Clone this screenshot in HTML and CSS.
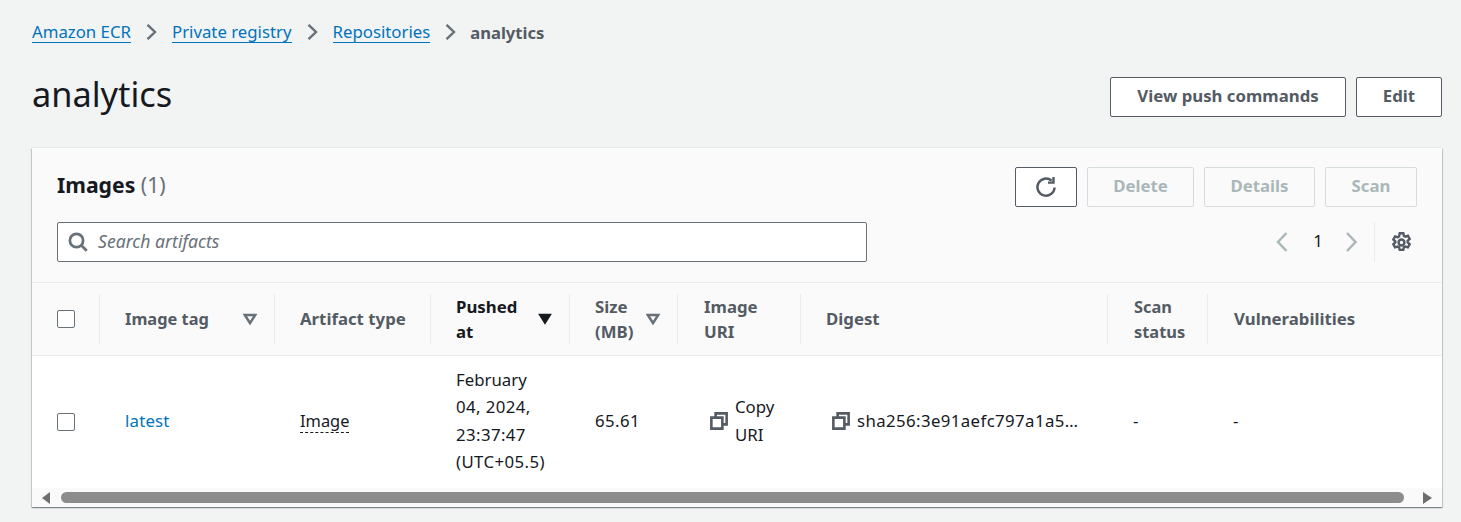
FILE: index.html
```html
<!DOCTYPE html>
<html lang="en">
<head>
<meta charset="utf-8">
<title>analytics</title>
<link rel="stylesheet" href="styles.css">
</head>
<body>
<nav class="crumbs">
  <a href="#">Amazon ECR</a>
  <svg class="sep" viewBox="0 0 16 16"><path d="M2.500 .8 10 8l-7.500 7.200"/></svg>
  <a href="#">Private registry</a>
  <svg class="sep" viewBox="0 0 16 16"><path d="M2.500 .8 10 8l-7.500 7.200"/></svg>
  <a href="#">Repositories</a>
  <svg class="sep" viewBox="0 0 16 16"><path d="M2.500 .8 10 8l-7.500 7.200"/></svg>
  <span class="here">analytics</span>
</nav>
<header class="page-head">
  <h1>analytics</h1>
  <div class="actions">
    <button class="btn btn-push">View push commands</button>
    <button class="btn btn-edit">Edit</button>
  </div>
</header>
<section class="card">
  <div class="card-head">
    <div class="title-row">
      <h2>Images <span class="count">(1)</span></h2>
      <div class="tools">
        <button class="btn btn-refresh" aria-label="Refresh">
          <svg class="ico" viewBox="0 0 20 20"><path d="M17.800 10.500a7.800 7.800 0 1 1-2.700-6.300"/><path d="M16.800 1v5h-5"/></svg>
        </button>
        <button class="btn off btn-delete">Delete</button>
        <button class="btn off btn-details">Details</button>
        <button class="btn off btn-scan">Scan</button>
      </div>
    </div>
    <div class="filter-row">
      <div class="search">
        <svg class="search-ico" viewBox="0 0 16 16"><circle cx="6.800" cy="6.800" r="5.300"/><path d="m10.800 10.800 4.200 4.200"/></svg>
        <span>Search artifacts</span>
      </div>
      <div class="pager">
        <svg class="pg" viewBox="0 0 20 20"><path d="M11.500 1 3 10l8.500 9"/></svg>
        <span class="page-num">1</span>
        <svg class="pg" viewBox="0 0 20 20"><path d="m3 1 8.500 9L3 19"/></svg>
        <span class="pref">
          <svg class="gear" viewBox="0 0 20 20"><circle cx="10" cy="10" r="2.800"/><path d="M8.300 1.200h3.400l.6 2.500 1.300.7 2.500-.8 1.700 3-1.900 1.700v1.600l1.900 1.700-1.700 3-2.500-.8-1.300.7-.6 2.500H8.300l-.6-2.500-1.300-.7-2.500.8-1.700-3 1.900-1.700V8.900L2.200 7.200l1.700-3 2.500.8 1.300-.7z"/></svg>
        </span>
      </div>
    </div>
  </div>
  <table class="grid">
    <colgroup>
      <col class="c1"><col class="c2"><col class="c3"><col class="c4"><col class="c5"><col class="c6"><col class="c7"><col class="c8"><col class="c9">
    </colgroup>
    <thead>
      <tr>
        <th class="sel"><span class="check"></span></th>
        <th><div class="th"><span class="tight">Image tag</span><svg class="sort" viewBox="0 0 12 10"><path d="M1.500 1.500h9L6 8.500z"/></svg></div></th>
        <th><div class="th"><span>Artifact type</span></div></th>
        <th class="active"><div class="th"><span>Pushed<br>at</span><svg class="sort on" viewBox="0 0 12 10"><path d="M1 1h10L6 9z"/></svg></div></th>
        <th><div class="th"><span>Size<br>(MB)</span><svg class="sort" viewBox="0 0 12 10"><path d="M1.500 1.500h9L6 8.500z"/></svg></div></th>
        <th class="nudge"><div class="th"><span>Image<br>URI</span></div></th>
        <th><div class="th"><span>Digest</span></div></th>
        <th class="nudge"><div class="th"><span class="tight">Scan<br>status</span></div></th>
        <th class="last nudge"><div class="th"><span>Vulnerabilities</span></div></th>
      </tr>
    </thead>
    <tbody>
      <tr>
        <td class="sel"><span class="check"></span></td>
        <td><a href="#" class="tag">latest</a></td>
        <td><span class="dotted">Image</span></td>
        <td>February<br><span class="num">04, 2024,</span><br><span class="num">23:37:47</span><br><span class="num">(UTC+05.5)</span></td>
        <td><span class="num">65.61</span></td>
        <td class="uri"><div class="copy"><svg class="copy-ico" viewBox="0 0 16 16"><path d="M1.200 5h9.800v9.800H1.200z"/><path d="M5 5V1.200h9.800V11H11"/></svg><span>Copy<br>URI</span></div></td>
        <td class="digest"><div class="copy"><svg class="copy-ico" viewBox="0 0 16 16"><path d="M1.200 5h9.800v9.800H1.200z"/><path d="M5 5V1.200h9.800V11H11"/></svg><span class="hash">sha256:3e91aefc797a1a5…</span></div></td>
        <td class="dash1">-</td>
        <td class="dash2">-</td>
      </tr>
    </tbody>
  </table>
  <div class="hscroll">
    <span class="arrow left"></span>
    <span class="thumb"></span>
    <span class="arrow right"></span>
  </div>
</section>
</body>
</html>
```
FILE: styles.css
```css
* { box-sizing: border-box; }
html, body { margin: 0; height: 522px; overflow: hidden; }
body {
  background: #f2f3f3;
  color: #16191f;
  font-family: "Noto Sans", "Open Sans", sans-serif;
  font-size: 16.800px;
  padding: 20px 19px 0 32px;
}
a { color: #0073bb; }
.crumbs { display: flex; align-items: center; height: 24px; }
.crumbs a { text-decoration: none; border-bottom: 1px solid #0073bb; line-height: 21px; }
.sep { width: 16px; height: 16px; margin: 0 11px 0 14px; fill: none; stroke: #687078; stroke-width: 2.400; }
.here { color: #545b64; font-weight: 700; font-size: 16.600px; margin-left: -1px; }
.page-head { display: flex; justify-content: space-between; align-items: center; height: 40px; margin-top: 33px; }
h1 { margin: -6px 0 0; font-size: 34.300px; font-weight: 400; line-height: 40px; }
.actions { display: flex; gap: 10px; }
.btn {
  display: flex; align-items: center; justify-content: center;
  height: 40px; padding: 0 0 4px; font: 700 16.800px "Noto Sans", sans-serif;
  color: #545b64; background: #fff;
  border: 1px solid #545b64; border-radius: 2px;
}
.btn-push { width: 236px; }
.btn-edit { width: 86px; }
.card {
  margin: 31px 0 0; height: 359px; background: #fff;
  box-shadow: 0 1px 1px 0 rgba(0, 28, 36, .3), 1px 1px 1px 0 rgba(0, 28, 36, .15), -1px 1px 1px 0 rgba(0, 28, 36, .15), 0 -1px 1px 0 rgba(0, 28, 36, .04);
}
.card-head { background: #fafafa; height: 135px; padding: 19px 25px 0 25px; border-bottom: 1px solid #eaeded; }
.title-row { display: flex; justify-content: space-between; align-items: center; height: 40px; }
h2 { margin: -5px 0 0; font-size: 21.200px; font-weight: 700; line-height: 36px; }
.count { color: #687078; font-weight: 400; }
.tools { display: flex; gap: 10px; }
.btn-refresh { width: 62px; background: #fff; padding: 0; }
.ico { width: 22px; height: 22px; fill: none; stroke: #545b64; stroke-width: 2.200; }
.off { color: #aab7b8; background: #fafafa; border-color: #d5dbdb; }
.btn-delete { width: 107px; }
.btn-details { width: 111px; }
.btn-scan { width: 92px; }
.filter-row { display: flex; justify-content: space-between; align-items: center; margin-top: 15px; height: 40px; }
.search {
  display: flex; align-items: center; gap: 10px; width: 810px; height: 40px; padding: 0 0 2px 10px;
  background: #fff; border: 1px solid #687078; border-radius: 2px;
  color: #687078; font-style: italic; font-size: 17.600px;
}
.search-ico { width: 20px; height: 20px; fill: none; stroke: #687078; stroke-width: 2.200; margin-top: 2px; }
.pager { display: flex; align-items: center; }
.pg { width: 20px; height: 20px; margin-left: -1px; fill: none; stroke: #aab7b8; stroke-width: 2.500; }
.page-num { width: 50px; padding-right: 4px; text-align: center; color: #16191f; margin-top: -4px; }
.pref { display: flex; align-items: center; height: 40px; margin-left: 10px; padding-left: 16px; border-left: 1px solid #eaeded; padding-right: 5px; }
.gear { width: 21px; height: 21px; fill: none; stroke: #545b64; stroke-width: 2.300; }
.grid { width: 1410px; table-layout: fixed; border-collapse: collapse; background: #fff; }
.c1 { width: 68px; } .c2 { width: 175px; } .c3 { width: 156px; } .c4 { width: 139px; } .c5 { width: 108px; }
.c6 { width: 123px; } .c7 { width: 307px; } .c8 { width: 100px; } .c9 { width: 234px; }
thead tr { height: 72px; background: #fafafa; border-bottom: 1px solid #eaeded; }
th { position: relative; padding: 0 25px; text-align: left; font-weight: 700; color: #545b64; line-height: 25px; }
th::after { content: ""; position: absolute; right: 0; top: 11px; height: 50px; border-right: 1px solid #eaeded; }
th.last::after { display: none; }
th.nudge { padding-left: 26px; }
.tight { font-size: 16.400px; }
.th { display: flex; align-items: center; justify-content: space-between; }
.active { color: #16191f; }
.sort { width: 14px; height: 12px; flex: none; margin-right: -7px; fill: none; stroke: #687078; stroke-width: 2.200; }
.sort.on { fill: #16191f; stroke: #16191f; stroke-width: 1; }
.sel { padding: 0 0 0 25px; }
.check { display: block; width: 18px; height: 18px; background: #fff; border: 1px solid #687078; border-radius: 2px; }
tbody tr { height: 133px; }
td { padding: 0 25px 2px; line-height: 27.500px; }
.num { letter-spacing: .4px; }
.tag { text-decoration: none; letter-spacing: .2px; }
.dotted { border-bottom: 1px dashed #16191f; font-size: 16.400px; }
.copy { display: flex; align-items: center; gap: 7px; }
.copy-ico { width: 18px; height: 18px; flex: none; fill: none; stroke: #545b64; stroke-width: 2.300; }
.uri { padding-left: 32px; padding-right: 0; }
.digest { padding-left: 31px; padding-right: 0; white-space: nowrap; }
.hash { letter-spacing: .4px; }
.hscroll { display: flex; align-items: center; height: 19px; background: #fafafa; }
.thumb { display: block; width: 1343px; height: 11px; margin-left: 11px; background: #8c8c8c; border-radius: 6px; }
.arrow { width: 0; height: 0; border-style: solid; border-color: transparent; }
.left { margin-left: 10px; border-width: 6px 8px 6px 0; border-right-color: #6e6e6e; }
.right { margin-left: 19px; border-width: 6px 0 6px 9px; border-left-color: #6e6e6e; }
```
